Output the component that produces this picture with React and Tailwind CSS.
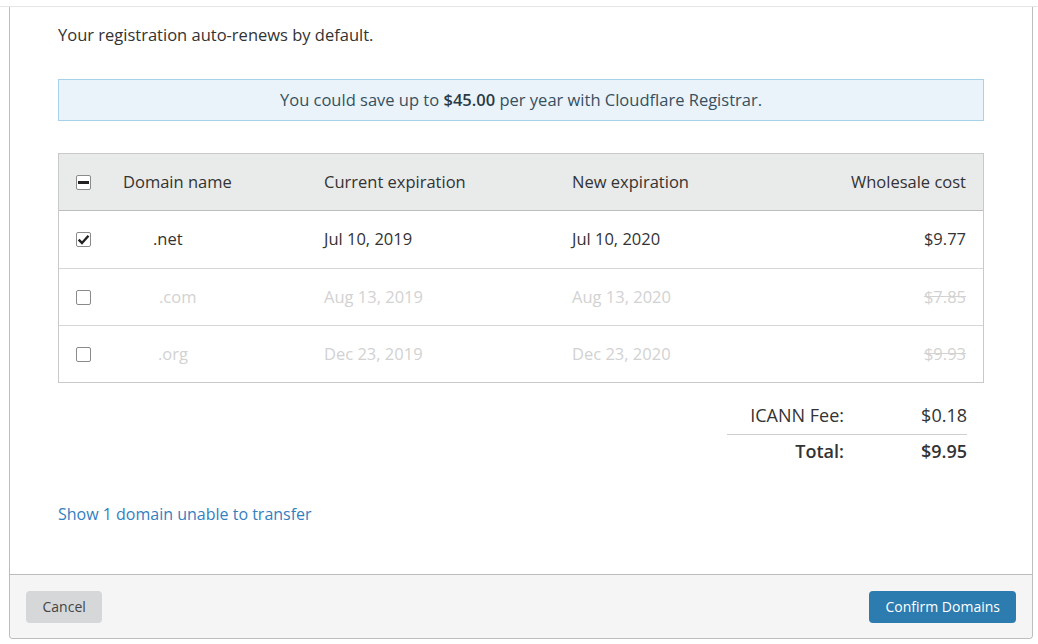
const rows = [
  { name: ".net", indent: "pl-[30px]", current: "Jul 10, 2019", next: "Jul 10, 2020", cost: "$9.77", on: true },
  { name: ".com", indent: "pl-[36px]", current: "Aug 13, 2019", next: "Aug 13, 2020", cost: "$7.85", on: false },
  { name: ".org", indent: "pl-[35px]", current: "Dec 23, 2019", next: "Dec 23, 2020", cost: "$9.93", on: false },
];

const Box = ({ state }) => (
  <span className="w-[15px] h-[15px] rounded-[2px] border border-[#8a8a8a] bg-white flex items-center justify-center">
    {state === "mixed" && <span className="w-[11px] h-[3px] bg-[#222]" />}
    {state === "checked" && (
      <svg width="13" height="13" viewBox="0 0 12 12">
        <path d="M1.5 6.2 L4.6 9.2 L10.6 2.6" fill="none" stroke="#222" strokeWidth="2.2" />
      </svg>
    )}
  </span>
);

const App = () => {
  return (
    <div className="w-[1038px] h-[644px] bg-white overflow-hidden text-[#333] [font-family:'Open_Sans',sans-serif]">
      <div className="h-[7px] border-b border-[#e6e6e6]" />
      <div className="ml-[9px] w-[1024px] h-[632px] border-x border-b border-[#bdbdbd] rounded-b-[4px] flex flex-col">
        <div className="flex-1 px-12 pt-[16px]">
          <p className="text-[16.5px] leading-[24px]">Your registration auto-renews by default.</p>

          <div className="mt-[32px] h-[42px] border border-[#a9d0ea] bg-[#eaf3fa] flex items-center justify-center text-[16.5px] text-[#36505f]">
            You could save up to&nbsp;<b className="font-semibold text-[#2b3a44]">$45.00</b>&nbsp;per year with Cloudflare Registrar.
          </div>

          <div className="mt-[32px] border border-[#c9c9c9] text-[16.5px]">
            <div className="h-[57px] bg-[#e9eaea] border-b border-[#bdbdbd] flex items-center pl-[17px] pr-[17px] text-[#333]">
              <div className="w-[47px]"><Box state="mixed" /></div>
              <div className="w-[201px]">Domain name</div>
              <div className="w-[248px]">Current expiration</div>
              <div className="flex-1">New expiration</div>
              <div className="text-right">Wholesale cost</div>
            </div>
            {rows.map((r, i) => (
              <div
                key={r.name}
                className={`h-[57px] flex items-center pl-[17px] pr-[17px] ${i > 0 ? "border-t border-[#d6d6d6]" : ""} ${r.on ? "text-[#333]" : "text-[#d2d2d2]"}`}
              >
                <div className="w-[47px]"><Box state={r.on ? "checked" : "off"} /></div>
                <div className={`w-[201px] ${r.indent}`}>{r.name}</div>
                <div className="w-[248px]">{r.current}</div>
                <div className="flex-1">{r.next}</div>
                <div className={`text-right ${r.on ? "" : "line-through"}`}>{r.cost}</div>
              </div>
            ))}
          </div>

          <div className="flex justify-end pr-[17px] mt-[20px]">
            <div className="w-[240px] text-[18px]">
              <div className="flex h-[26px] items-center pb-[2px]">
                <span className="w-[117px] text-right">ICANN Fee:</span>
                <span className="flex-1 text-right">$0.18</span>
              </div>
              <div className="border-t border-[#cfcfcf] mt-[5px] flex h-[34px] items-center font-semibold">
                <span className="w-[117px] text-right">Total:</span>
                <span className="flex-1 text-right">$9.95</span>
              </div>
            </div>
          </div>

          <a className="block mt-[34px] text-[16px] text-[#3380bf]">Show 1 domain unable to transfer</a>
        </div>

        <div className="h-[64px] border-t border-[#bdbdbd] bg-[#f5f5f5] rounded-b-[4px] flex items-center justify-between pl-[16px] pr-[16px]">
          <button className="h-[32px] px-[16.5px] rounded-[4px] bg-[#d6d7d9] text-[14px] text-[#444]">Cancel</button>
          <button className="h-[32px] px-[16px] rounded-[4px] bg-[#2c7cb0] text-[14px] text-white">Confirm Domains</button>
        </div>
      </div>
    </div>
  );
};

export default App;
